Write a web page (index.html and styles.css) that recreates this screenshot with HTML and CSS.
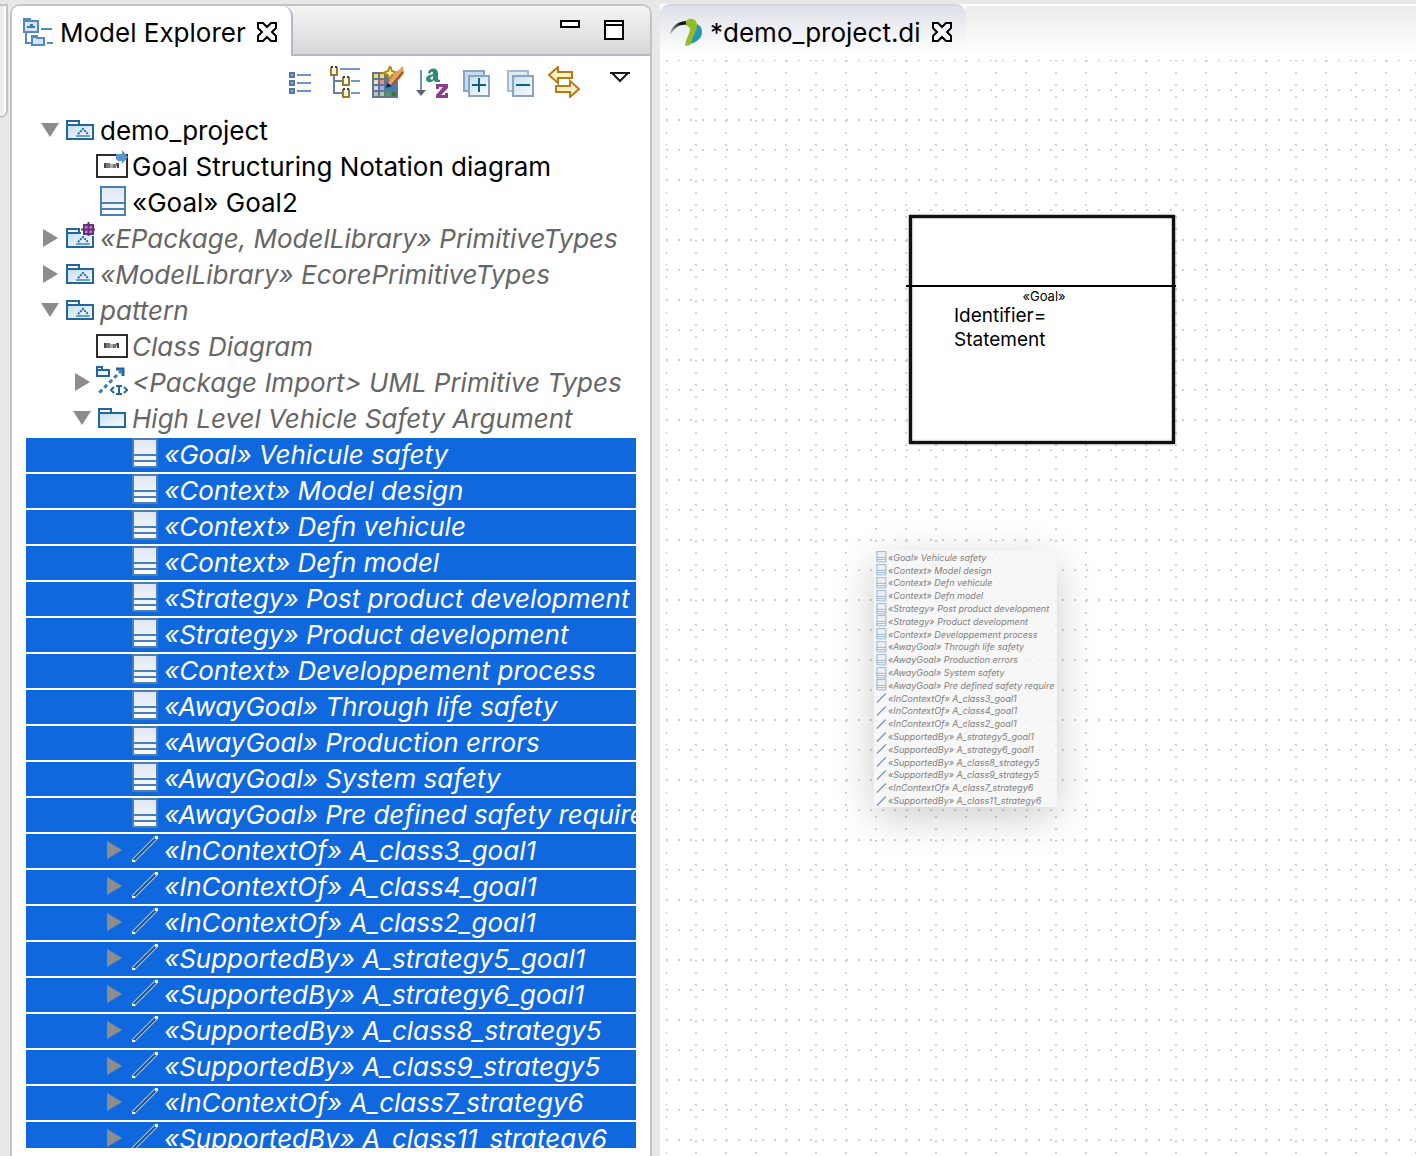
FILE: index.html
```html
<!DOCTYPE html>
<html lang="en">
<head>
<meta charset="utf-8">
<title>demo_project.di</title>
<link rel="stylesheet" href="styles.css">
</head>
<body>
<svg class="defs" aria-hidden="true">
  <defs>
    <linearGradient id="sheet" x1="0" y1="0" x2="0" y2="1"><stop offset="0" stop-color="#dfe6f4"/><stop offset="1" stop-color="#fbfcfe"/></linearGradient>
    <linearGradient id="pane" x1="0" y1="0" x2="1" y2="1"><stop offset="0" stop-color="#c5dff0"/><stop offset="1" stop-color="#fafdff"/></linearGradient>
    <linearGradient id="gold" x1="0" y1="0" x2="0" y2="1"><stop offset="0" stop-color="#fffbe6"/><stop offset="1" stop-color="#fbe6a2"/></linearGradient>
    <linearGradient id="horn" x1="0" y1="0" x2="1" y2="0"><stop offset="0" stop-color="#b4b4b8"/><stop offset=".6" stop-color="#18181c"/></linearGradient>
  </defs>
  <symbol id="i-open" viewBox="0 0 24 32"><path d="M1 9h18l-9 14z" fill="#8c8c8c"/></symbol>
  <symbol id="i-shut" viewBox="0 0 24 32"><path d="M3 7l15 9-15 9z" fill="#8c8c8c"/></symbol>
  <symbol id="i-folder" viewBox="0 0 32 32">
    <path d="M3 12h26v13H3z" fill="url(#pane)"/>
    <path d="M3 25V7h12v4h14v14zM3 11h12" fill="none" stroke="#21669f" stroke-width="2"/>
  </symbol>
  <symbol id="i-model" viewBox="0 0 32 32">
    <use href="#i-folder"/>
    <path d="M12 22h14" stroke="#6a9fc6" stroke-width="2"/>
    <path d="M14 20l5-5 5 5" fill="none" stroke="#21669f" stroke-width="2" stroke-dasharray="2 1"/>
  </symbol>
  <symbol id="i-epackage" viewBox="0 0 32 32">
    <use href="#i-model"/>
    <path d="M17 0h15v14H17z" fill="#fff"/>
    <path d="M20 3h9v9h-9z" fill="#b57fc0" stroke="#6b2c78" stroke-width="2"/>
    <path d="M24.500 0v14M17 7.500h14" stroke="#6b2c78" stroke-width="2"/>
  </symbol>
  <symbol id="i-diagram" viewBox="0 0 32 32">
    <path d="M1 5h30v22H1z" fill="#fff" stroke="#2b2b2b" stroke-width="2"/>
    <path d="M8 13h2v5H8zM20 13h3v5h-2z" fill="#444"/><path d="M10 13h4v5h-4zM17 14h3v4h-3z" fill="#777"/><path d="M14 14h3v4h-3z" fill="#aaa"/>
  </symbol>
  <symbol id="i-linked" viewBox="0 0 32 32">
    <use href="#i-diagram"/>
    <path d="M20 4h6V0l6 7-6 7v-3h-4l-2-2z" fill="#5b93cc"/>
  </symbol>
  <symbol id="i-class" viewBox="0 0 32 32">
    <path d="M5 1h24v28H5z" fill="url(#sheet)" stroke="#4a7fb5" stroke-width="2"/>
    <path d="M5 17h24M5 23h24" stroke="#4a7fb5" stroke-width="2"/>
  </symbol>
  <symbol id="i-import" viewBox="0 0 32 32">
    <path d="M1 10V1h5v3h7v6zM1 4h5" fill="#eaf3fa" stroke="#21669f" stroke-width="2"/>
    <path d="M20 3h7v7" fill="none" stroke="#21669f" stroke-width="3"/>
    <path d="M26 4L3 27" stroke="#3c7cb2" stroke-width="3" stroke-dasharray="4 3"/>
    <path d="M20 20h6M20 28h6M23 20v8M18 21l-3 3 3 3M28 21l3 3-3 3" fill="none" stroke="#21669f" stroke-width="2"/>
  </symbol>
  <symbol id="i-link" viewBox="0 0 32 32">
    <path d="M5 27L29 3" stroke="#a9c3dc" stroke-width="4"/>
    <path d="M5 27L29 3" stroke="#1d4f85" stroke-width="2"/>
    <path d="M4 26h3v2H4zM27 2h3v3h-3z" fill="#fff"/>
  </symbol>
  <symbol id="i-thinlink" viewBox="0 0 32 32"><path d="M5 28L29 4" stroke="#2c6aa8" stroke-width="3"/></symbol>
  <symbol id="i-close" viewBox="0 0 20 20"><path d="M1 1h5l4 4 4-4h5v5l-4 4 4 4v5h-5l-4-4-4 4H1v-5l4-4-4-4z" fill="#fff" stroke="#000" stroke-width="2"/></symbol>
</svg>

<div class="stub"></div>

<section class="view" aria-label="Model Explorer">
  <header class="view-bar">
    <div class="view-tab">
      <svg class="tab-icon" viewBox="0 0 32 32" aria-hidden="true">
        <path d="M2 3h6v2h8v11H2z" fill="#d3e4f2" stroke="#5489bb" stroke-width="2"/><path d="M1 2h8v4H1z" fill="#5489bb"/>
        <path d="M5 12h8v-2h-2V8H8v2H5z" fill="#3f78af"/>
        <path d="M4 17v10h5M19 13h11M25 27h6" fill="none" stroke="#5489bb" stroke-width="2"/>
        <path d="M10 20h5v2h7v7H10z" fill="#d3e4f2" stroke="#5489bb" stroke-width="2"/><path d="M9 19h7v3H9z" fill="#5489bb"/>
      </svg>
      <h1 class="tab-title">Model Explorer</h1>
      <button class="close" aria-label="Close Model Explorer"><svg viewBox="0 0 20 20"><use href="#i-close"/></svg></button>
    </div>
    <div class="window-buttons">
      <button aria-label="Minimize"><svg viewBox="0 0 20 20"><path d="M1 1h18v6H1z" fill="#fff" stroke="#000" stroke-width="2"/></svg></button>
      <button aria-label="Maximize"><svg viewBox="0 0 20 20"><path d="M1 1h18v18H1zM1 5h18" fill="#fff" stroke="#000" stroke-width="2"/></svg></button>
    </div>
  </header>

  <div class="toolbar" role="toolbar" aria-label="Explorer tools">
    <button aria-label="Flat list"><svg viewBox="0 0 32 32"><path d="M6 7h4v4H6zM6 15h4v4H6zM6 23h4v4H6z" fill="#8fa6cf" stroke="#5674ab" stroke-width="2"/><path d="M13 9h14M13 17h14M13 25h14" stroke="#6d8fc4" stroke-width="2"/></svg></button>
    <button aria-label="Tree layout"><svg viewBox="0 0 32 32"><path d="M6 10v17h8M6 15h8" fill="none" stroke="#6680ae" stroke-width="2"/><path d="M12 3h20M23 15h9M23 27h9" stroke="#7896c8" stroke-width="2"/><path d="M3 1v8h6V1M15 11v8h6v-8M15 23v8h6v-8" fill="#fff6da" stroke="#9a7a2e" stroke-width="2"/><path d="M3 1h2M7 1h2M15 11h2M19 11h2M15 23h2M19 23h2" stroke="#27406f" stroke-width="2"/></svg></button>
    <button aria-label="Customize view"><svg viewBox="0 0 32 32"><path d="M0 6h26v26H0z" fill="#66758a"/><path d="M2 8h4v4H2zM8 8h4v4H8z" fill="#e8e06e"/><path d="M2 14h4v4H2z" fill="#f1dcc4"/><path d="M8 14h4v4H8z" fill="#f08e96"/><path d="M2 20h4v4H2z" fill="#cad9fa"/><path d="M8 20h4v4H8z" fill="#8fb4f2"/><path d="M14 20h10v4H14z" fill="#2f80c9"/><path d="M2 26h4v4H2zM8 26h4v4H8z" fill="#b5c5bb"/><path d="M14 26h4v4h-4z" fill="#42a266"/><path d="M20 26h4v4h-4z" fill="#2c7c3e"/><path d="M18 0l2 5 6 2-6 2-2 5-2-5-5-2 5-2z" fill="#fff0a2" stroke="#b48a1d" stroke-width="2"/><path d="M31 0l-9 8-6 9 4 2 8-6 4-6z" fill="#e8a162"/><path d="M31 6L20 19" stroke="#9b5724" stroke-width="2"/><path d="M15 17l5 3-6 2z" fill="#14265c"/></svg></button>
    <button aria-label="Sort alphabetically"><svg viewBox="0 0 32 32"><path d="M5 4v22" stroke="#6f97bd" stroke-width="2"/><path d="M0 24h10l-5 6z" fill="#5c6670"/><path d="M12 7c1-6 10-6 10 0v5c0 2 1 2 2 2v2h-5l-1-2c-2 3-8 3-8-1 0-4 5-4 7-5 0-4-3-2-3 0zM17 10c-4 1-3 5 0 3z" fill="#2a8c78"/><path d="M20 18h12v4l-7 7h4v-2h3v5H20v-3l7-8h-4v2h-3z" fill="#8f3c91"/></svg></button>
    <button aria-label="Expand all"><svg viewBox="0 0 32 32"><path d="M4 5h20v20H4z" fill="#c2dff0" stroke="#8da2bf" stroke-width="2"/><path d="M9 10h20v20H9z" fill="url(#pane)" stroke="#8da2bf" stroke-width="2"/><path d="M12 19h14M19 12v14" stroke="#175a8f" stroke-width="2"/></svg></button>
    <button aria-label="Collapse all"><svg viewBox="0 0 32 32"><path d="M4 5h20v20H4z" fill="#dcecf5" stroke="#a6bace" stroke-width="2"/><path d="M9 10h20v20H9z" fill="url(#pane)" stroke="#8da2bf" stroke-width="2"/><path d="M12 19h14" stroke="#175a8f" stroke-width="2"/></svg></button>
    <button aria-label="Link with editor"><svg viewBox="0 0 32 32"><path d="M1 9l9-8v5h14v6H10v5z" fill="url(#gold)" stroke="#b77a1b" stroke-width="2"/><path d="M31 23l-9-8v5H8v6h14v5z" fill="url(#gold)" stroke="#b77a1b" stroke-width="2"/></svg></button>
    <button class="menu" aria-label="View menu"><svg viewBox="0 0 32 32"><path d="M8 7h16l-8 8z" fill="#fff" stroke="#1a1a1a" stroke-width="2"/><path d="M6 7h20" stroke="#1a1a1a" stroke-width="2"/></svg></button>
  </div>

  <ul class="tree" role="tree" aria-label="Model" aria-multiselectable="true" id="tree"></ul>
</section>

<main class="editor">
  <header class="editor-bar">
    <div class="editor-tab">
      <svg class="tab-icon" viewBox="0 0 32 32" aria-hidden="true">
        <path d="M0 19C1 10 8 5 17 5v4C10 8 5 11 0 19z" fill="url(#horn)"/>
        <path d="M25 8c5 0 7 4 7 8 0 6-5 10-12 12z" fill="#2298b8"/>
        <path d="M16 5c3-4 11-3 11 4 0 7-4 9-5 16l-2 4-5 1c1-8 5-12 5-18l-4-3z" fill="#93bd28"/>
      </svg>
      <h2 class="tab-title">*demo_project.di</h2>
      <button class="close" aria-label="Close editor"><svg viewBox="0 0 20 20"><use href="#i-close"/></svg></button>
    </div>
    <div class="editor-rest"></div>
  </header>
  <div class="canvas">
    <article class="node">
      <p class="stereotype">«Goal»</p>
      <p class="property">Identifier=</p>
      <p class="property">Statement</p>
    </article>
    <ul class="ghost" id="ghost" aria-hidden="true"></ul>
  </div>
</main>
<script src="tree.js"></script>
</body>
</html>
```
FILE: styles.css
```css
* { box-sizing: border-box; }

body {
  display: flex;
  height: 100vh;
  margin: 0;
  padding-top: 4px;
  overflow: hidden;
  background: #e8e8e8;
  color: #000;
  font-family: Inter, "Liberation Sans", sans-serif;
}

h1, h2, p, ul { margin: 0; padding: 0; font-weight: 400; list-style: none; }
button { display: flex; align-items: center; justify-content: center; padding: 0; border: 0; background: none; }
svg { display: block; flex: none; }
.defs { position: absolute; width: 0; height: 0; }

.stub {
  width: 8px;
  height: 114px;
  margin-right: 2px;
  border: solid #c4c4c1;
  border-width: 2px 2px 2px 0;
  border-bottom-right-radius: 8px;
  background: #ececec;
  box-shadow: inset -2px 0 #fff;
}

/* Model Explorer */
.view {
  display: flex;
  flex-direction: column;
  flex: 0 1 642px;
  min-width: 0;
  padding-bottom: 8px;
  overflow: hidden;
  border: 2px solid #c4c4c1;
  border-bottom: 0;
  border-radius: 10px 10px 0 0;
  background: #fff;
}
.view-bar {
  display: flex;
  justify-content: space-between;
  height: 50px;
  flex: none;
  background: linear-gradient(#f4f4f4, #d7d7d7);
  box-shadow: inset 0 -2px #b4b8cc;
}
.view-tab, .editor-tab { display: flex; align-items: center; padding: 2px 14px 0 10px; }
.view-tab {
  border-right: 2px solid #b4b8cc;
  border-top-right-radius: 10px;
  background: #fff;
}
.tab-icon { width: 32px; height: 32px; margin-right: 6px; }
.tab-title { padding-top: 2px; font-size: 26px; line-height: 32px; white-space: nowrap; }
.close { width: 20px; height: 20px; margin-left: 11px; }
.close svg { width: 20px; height: 20px; }
.window-buttons { display: flex; gap: 24px; padding: 14px 26px 0 0; }
.window-buttons button, .window-buttons svg { width: 20px; height: 20px; }

.toolbar { display: flex; justify-content: flex-end; flex: none; padding: 10px 8px 16px 0; }
.toolbar button { width: 44px; height: 32px; }
.toolbar svg { width: 32px; height: 32px; }
.toolbar .menu { margin-left: 12px; }

.tree { flex: 1; min-height: 0; margin: 0 14px; overflow: hidden; font-size: 26px; }
.row {
  display: flex;
  align-items: center;
  height: 36px;
  padding: 0 0 2px 14px;
  border-bottom: 2px solid #fff;
  overflow: hidden;
  white-space: nowrap;
}
.row[aria-level="2"] { padding-left: 46px; }
.row[aria-level="3"] { padding-left: 78px; }
.row svg { height: 32px; }
.row .twisty { width: 24px; }
.row .icon { width: 32px; margin-right: 4px; }
.row.readonly { color: #666; font-style: italic; }
.row[aria-selected="true"] { background: #1068df; color: #fff; }

/* Diagram editor */
.editor { display: flex; flex-direction: column; flex: 1; min-width: 0; margin-left: 8px; background: #fff; }
.editor-bar { display: flex; height: 50px; flex: none; }
.editor-tab {
  padding-top: 4px;
  border-top: 2px solid #d4d7e4;
  border-radius: 10px 10px 0 0;
  background: linear-gradient(#dee1e9, #fff);
}
.editor-tab .tab-icon { margin-right: 8px; }
.editor-rest { flex: 1; border-top: 2px solid #fff; background: linear-gradient(#ebebeb, #fff); }
.canvas {
  position: relative;
  flex: 1;
  margin: 6px 0 0 6px;
  background:
    conic-gradient(from 270deg at 2px 2px, #d2d2d2 90deg, transparent 0) 0 -1px / 12px 30px,
    conic-gradient(from 270deg at 2px 2px, #d2d2d2 90deg, transparent 0) -1px 0 / 30px 12px;
}
.node {
  position: absolute;
  left: 243px;
  top: 155px;
  width: 266px;
  height: 229px;
  padding: 70px 0 0 42px;
  border: 3px solid #111;
  background: #fff;
  box-shadow: 0 0 2px #444, inset 0 0 2px #444;
}
.node::before {
  content: "";
  position: absolute;
  left: -6px;
  right: -4px;
  top: 67px;
  height: 2px;
  background: #000;
}
.stereotype { margin-left: -42px; padding-left: 4px; font-size: 13px; line-height: 16px; text-align: center; }
.property { font-size: 19px; line-height: 24px; }

.ghost {
  position: absolute;
  left: 208px;
  top: 491px;
  display: flex;
  flex-direction: column;
  width: 183px;
  height: 256px;
  background: rgba(245, 245, 245, .8);
  color: #808080;
  font-size: 9px;
  font-style: italic;
  box-shadow: 0 10px 40px rgba(0, 0, 0, .2);
}
.ghost li { display: flex; align-items: center; flex: 1; min-height: 0; overflow: hidden; padding-left: 1px; white-space: nowrap; }
.ghost svg { width: 12px; height: 12px; margin-right: 1px; opacity: .7; }
```
FILE: tree.js
```js
const rows = [
  [1, 'open', 'model', 'demo_project', 'own'],
  [2, '', 'linked', 'Goal Structuring Notation diagram', 'own'],
  [2, '', 'class', '«Goal» Goal2', 'own'],
  [1, 'shut', 'epackage', '«EPackage, ModelLibrary» PrimitiveTypes'],
  [1, 'shut', 'model', '«ModelLibrary» EcorePrimitiveTypes'],
  [1, 'open', 'model', 'pattern'],
  [2, '', 'diagram', 'Class Diagram'],
  [2, 'shut', 'import', '<Package Import> UML Primitive Types'],
  [2, 'open', 'folder', 'High Level Vehicle Safety Argument'],
];

const elements = [
  '«Goal» Vehicule safety', '«Context» Model design', '«Context» Defn vehicule', '«Context» Defn model',
  '«Strategy» Post product development', '«Strategy» Product development', '«Context» Developpement process',
  '«AwayGoal» Through life safety', '«AwayGoal» Production errors', '«AwayGoal» System safety',
  '«AwayGoal» Pre defined safety require',
];

const links = [
  '«InContextOf» A_class3_goal1', '«InContextOf» A_class4_goal1', '«InContextOf» A_class2_goal1',
  '«SupportedBy» A_strategy5_goal1', '«SupportedBy» A_strategy6_goal1', '«SupportedBy» A_class8_strategy5',
  '«SupportedBy» A_class9_strategy5', '«InContextOf» A_class7_strategy6', '«SupportedBy» A_class11_strategy6',
];

const svg = (name, cls) => `<svg class="${cls}" viewBox="0 0 ${cls === 'twisty' ? 24 : 32} 32">${name ? `<use href="#i-${name}"/>` : ''}</svg>`;

const row = (level, twisty, icon, text, kind, selected) => {
  const li = document.createElement('li');
  li.className = kind === 'own' ? 'row' : 'row readonly';
  li.setAttribute('role', 'treeitem');
  li.setAttribute('aria-level', level);
  li.setAttribute('aria-selected', Boolean(selected));
  if (twisty) li.setAttribute('aria-expanded', twisty === 'open');
  li.innerHTML = svg(twisty, 'twisty') + svg(icon, 'icon');
  li.append(text);
  return li;
};

const tree = document.getElementById('tree');
rows.forEach(r => tree.append(row(...r)));
elements.forEach(t => tree.append(row(3, '', 'class', t, '', true)));
links.forEach(t => tree.append(row(3, 'shut', 'link', t, '', true)));

const ghost = document.getElementById('ghost');
[...elements.map(t => ['class', t]), ...links.map(t => ['thinlink', t])].forEach(([icon, text]) => {
  const li = document.createElement('li');
  li.innerHTML = svg(icon, 'icon');
  li.append(text);
  ghost.append(li);
});
```
